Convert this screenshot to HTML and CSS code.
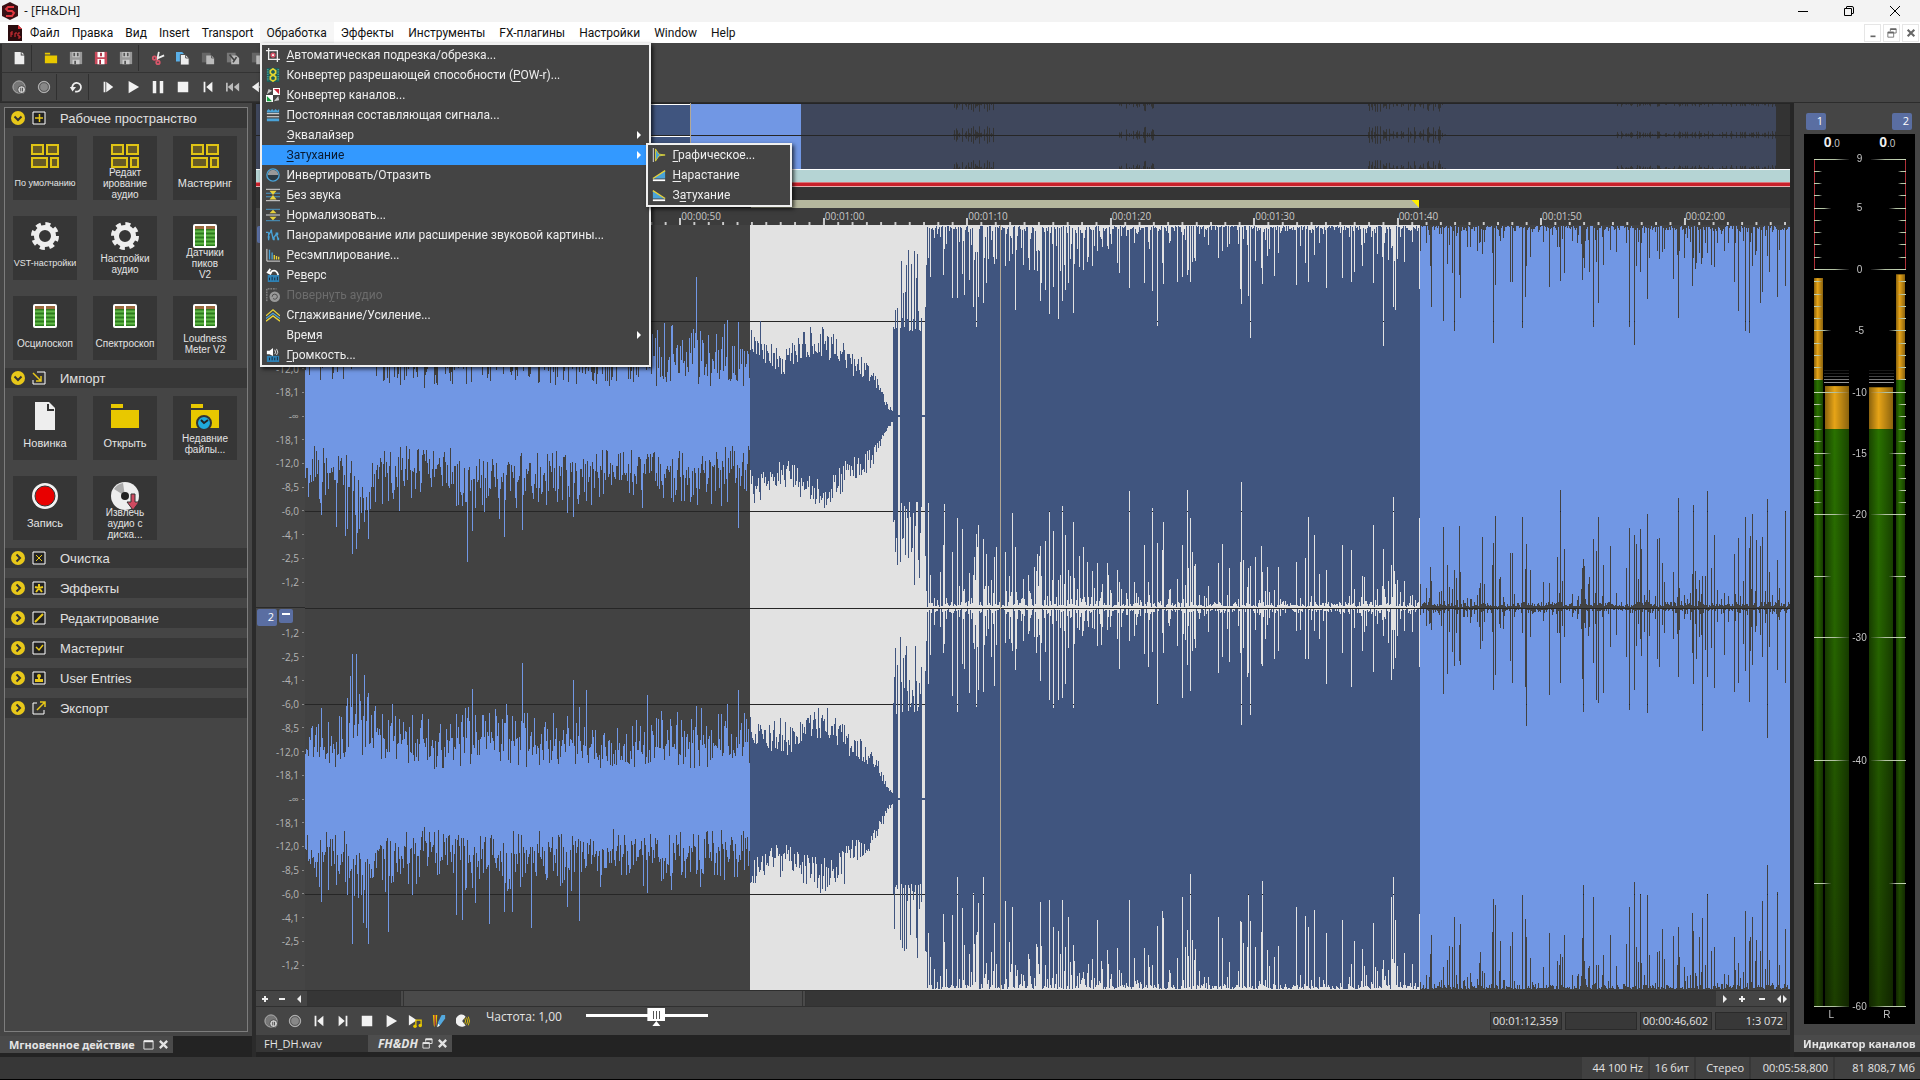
FILE: index.html
```html
<!DOCTYPE html>
<html lang="ru">
<head>
    <meta charset="UTF-8" />
    <title>FH&amp;DH</title>
    <link rel="stylesheet" href="styles.css">
</head>
<body>
    <!-- Icon symbols -->
    <svg class="symbols" aria-hidden="true">
        <symbol id="i-doc" viewBox="0 0 16 16"><path d="M3 1h7v4h4v10H3z" fill="#eee"/><path d="M11 1l3 3h-3z" fill="#eee"/></symbol>
        <symbol id="i-folder" viewBox="0 0 16 16"><path d="M1 2h6v2H1zM1 5h14v9H1z" fill="#e8c800"/></symbol>
        <symbol id="i-save" viewBox="0 0 16 16"><path d="M1 1h14v14H1z" fill="#999"/><path d="M4 1h8v6H4zM4 10h8v5H4z" fill="#ccc"/><path d="M5 2h2v4H5zM9 2h2v4H9zM6 11h2v4H6z" fill="#555"/></symbol>
        <symbol id="i-saveas" viewBox="0 0 16 16"><path d="M1 1h14v14H1z" fill="#c94a5c"/><path d="M4 1h8v6H4zM4 9h8v6H4z" fill="#fff"/><path d="M7 2h2v4H7zM6 10h2v5H6z" fill="#a3243a"/></symbol>
        <symbol id="i-cut" viewBox="0 0 16 16"><path d="M9 1L7 10M15 5L6 9" stroke="#eee" stroke-width="2"/><circle cx="4" cy="8" r="2" fill="none" stroke="#d8566a" stroke-width="2"/><circle cx="8" cy="13" r="2" fill="none" stroke="#d8566a" stroke-width="2"/></symbol>
        <symbol id="i-copy" viewBox="0 0 16 16"><path d="M0 1h7l2 2v9H0z" fill="#5ab0e8"/><path d="M5 4h6l4 4v8H5z" fill="#eee" stroke="#444"/><path d="M11 4v4h4" fill="none" stroke="#444"/></symbol>
        <symbol id="i-paste" viewBox="0 0 16 16"><path d="M1 2h10v11H1z" fill="#666"/><path d="M6 5h6l3 3v7H6z" fill="#bbb"/><path d="M12 5v3h3" stroke="#555" fill="none"/></symbol>
        <symbol id="i-paste2" viewBox="0 0 16 16"><path d="M1 2h10v11H1z" fill="#777"/><path d="M6 5h6l3 3v7H6z" fill="#bbb"/><path d="M4 4l5 6M12 7l-4 6" stroke="#444" stroke-width="2"/></symbol>
        <symbol id="i-recpause" viewBox="0 0 16 16"><circle cx="8" cy="8" r="7" fill="#777" stroke="#bbb"/><circle cx="11" cy="11" r="4.5" fill="#ccc" stroke="#444"/><path d="M10 9v4M12 9v4" stroke="#444"/></symbol>
        <symbol id="i-rec" viewBox="0 0 16 16"><circle cx="8" cy="8" r="6.5" fill="#888" stroke="#bbb"/><circle cx="8" cy="8" r="5" fill="none" stroke="#555"/></symbol>
        <symbol id="i-loop" viewBox="0 0 16 16"><path d="M4 10a5 5 0 1 1 3 3" fill="none" stroke="#eee" stroke-width="2"/><path d="M1 8h7l-4 5z" fill="#eee"/></symbol>
        <symbol id="i-playall" viewBox="0 0 16 16"><path d="M3 2h2v12H3zM6 2l8 6-8 6z" fill="#f2f2f2"/></symbol>
        <symbol id="i-play" viewBox="0 0 16 16"><path d="M3 1l12 7-12 7z" fill="#f2f2f2"/></symbol>
        <symbol id="i-pause" viewBox="0 0 16 16"><path d="M2 1h4v14H2zM10 1h4v14h-4z" fill="#f2f2f2"/></symbol>
        <symbol id="i-stop" viewBox="0 0 16 16"><path d="M2 2h12v12H2z" fill="#f2f2f2"/></symbol>
        <symbol id="i-start" viewBox="0 0 16 16"><path d="M3 2h2v12H3zM13 2v12L6 8z" fill="#f2f2f2"/></symbol>
        <symbol id="i-end" viewBox="0 0 16 16"><path d="M11 2h2v12h-2zM3 2v12l7-6z" fill="#f2f2f2"/></symbol>
        <symbol id="i-rew" viewBox="0 0 16 16"><path d="M0 3h2v10H0zM8 3v10L2 8zM15 3v10L9 8z" fill="#bbb"/></symbol>
        <symbol id="i-back" viewBox="0 0 16 16"><path d="M9 2v12L1 8zM16 2v12L9 8z" fill="#eee"/></symbol>
        <symbol id="i-playnote" viewBox="0 0 16 16"><path d="M1 1l9 6-9 6z" fill="#f2f2f2"/><path d="M9 13V7h6v6" stroke="#e8c800" stroke-width="1.5" fill="none"/><circle cx="8" cy="14" r="2" fill="#e8c800"/><circle cx="14" cy="13" r="2" fill="#e8c800"/></symbol>
        <symbol id="i-pencils" viewBox="0 0 16 16"><path d="M1 1h2v14l-1-2zM4 1h2l-1 14z" fill="#e8c800"/><path d="M3 1h1v12H3z" fill="#e33"/><path d="M11 1h4v4l-5 7-4 3 1-6z" fill="#54a9de"/><path d="M6 15l1-4 2 2z" fill="#fff"/></symbol>
        <symbol id="i-scrub" viewBox="0 0 16 16"><path d="M9 1a7 7 0 1 0 2 12L7 8l4-5z" fill="#f2f2f2"/><path d="M10 5q2 3 0 6M12 4q3 4 0 8M14 3q3 5 0 10" stroke="#e8c800" fill="none"/></symbol>

        <symbol id="i-crop" viewBox="0 0 16 16"><path d="M0 3h13v13M3 0v13h13" fill="none" stroke="#eee" stroke-width="1.500"/><circle cx="8" cy="8" r="3" fill="#d8566a"/><path d="M7 7h2v2H7z" fill="#fff"/></symbol>
        <symbol id="i-bits" viewBox="0 0 16 16"><path d="M1 0h14v16H1z" fill="#1c5a58"/><path d="M2 1v14M14 1v14" stroke="#4bb2a8" stroke-dasharray="1 1" stroke-width="2"/><path d="M8 1l3 2v3L8 8 5 6V3zM8 8l3 2v3l-3 2-3-2v-3z" fill="none" stroke="#e2d531" stroke-width="2"/></symbol>
        <symbol id="i-chan" viewBox="0 0 16 16"><path d="M8 0h8v8H8zM0 8h8v8H0z" fill="#fff"/><path d="M1 7l2-6 4 2zM9 15l5-6 1 5z" fill="#ccc"/><path d="M9 1h6v6z" fill="#c8283c"/><path d="M1 9l6 6H1z" fill="#18a040"/></symbol>
        <symbol id="i-dc" viewBox="0 0 16 16"><path d="M1 3l2-2 2 2 2-2 2 2 2-2 2 2 2-2v4H1zM1 12h14v3H1z" fill="#4aa3d8"/><path d="M1 6.500h14M1 10h14" stroke="#fff"/></symbol>
        <symbol id="i-invert" viewBox="0 0 16 16"><circle cx="8" cy="8" r="7" fill="#2c3b44" stroke="#4aa3d8" stroke-width="1.500"/><path d="M2 8a6 6 0 0 1 12 0z" fill="#999"/></symbol>
        <symbol id="i-mute" viewBox="0 0 16 16"><path d="M0 1.500h16M0 14.500h16" stroke="#eee"/><path d="M0 6h16M0 10h16" stroke="#4aa3d8"/><path d="M4 3h8L8 8zM4 13h8L8 8z" fill="#e8d23a"/></symbol>
        <symbol id="i-norm" viewBox="0 0 16 16"><path d="M0 1.500h16M0 14.500h16" stroke="#4aa3d8"/><path d="M0 8h16" stroke="#eee"/><path d="M4 6h8L8 2zM4 10h8l-4 4z" fill="#e8d23a"/></symbol>
        <symbol id="i-pan" viewBox="0 0 16 16"><path d="M0 5h3M3 5v9M3 8l3-5 2 9 4-5 2 6" fill="none" stroke="#4aa3d8" stroke-width="1.500"/><path d="M2 9h2v3H2zM5 2h2v3H5zM11 5h3v3h-3zM8 11h2v3H8zM13 11h2v3h-2z" fill="#4aa3d8"/></symbol>
        <symbol id="i-resample" viewBox="0 0 16 16"><path d="M1 1v14h15" stroke="#eee" fill="none"/><path d="M4 2v11M7 5v8" stroke="#4aa3d8" stroke-width="1.500"/><path d="M9.500 8v5M12 9v4M14.500 10v3" stroke="#e8d23a" stroke-width="1.500"/></symbol>
        <symbol id="i-reverse" viewBox="0 0 16 16"><path d="M2 8h13v8H2z" fill="#2f82b5"/><path d="M4 14v-3M7 14v-4M10 14v-3M13 14v-4" stroke="#123"/><path d="M2 5h5M5 1L2 5l4 2M6 4q6-3 8 4" fill="none" stroke="#fff" stroke-width="2"/></symbol>
        <symbol id="i-rotate" viewBox="0 0 16 16"><path d="M1 15V1h11" fill="none" stroke="#aaa" stroke-dasharray="2 1"/><circle cx="10" cy="10" r="6" fill="#999"/><path d="M7 10a3 3 0 0 1 6 0M13 10a3 3 0 0 1-5 2" stroke="#444" fill="none"/></symbol>
        <symbol id="i-smooth" viewBox="0 0 16 16"><path d="M0 9l8-7 8 7M0 15l8-6 8 6" fill="none" stroke="#e8d23a" stroke-width="1.500"/><path d="M0 12l8-6 8 6" fill="none" stroke="#4aa3d8" stroke-width="1.500"/></symbol>
        <symbol id="i-volume" viewBox="0 0 16 16"><path d="M1 9h14v7H1z" fill="#2f82b5"/><path d="M4 14v-3M7 14v-4M10 14v-3M13 14v-4" stroke="#123"/><path d="M1 3h3l4-3v9L4 7H1z" fill="#fff"/><path d="M10 2q2 3 0 5M12 1q3 4 0 7" stroke="#eee" fill="none"/></symbol>
        <symbol id="i-graph" viewBox="0 0 16 16"><path d="M1.500 0v16" stroke="#eee"/><path d="M4 1l4 6 7 1-7 1-4 6z" fill="#4aa3d8" stroke="#e2d531"/></symbol>
        <symbol id="i-fadein" viewBox="0 0 16 16"><path d="M1 12L15 3v9z" fill="#4aa3d8"/><path d="M1 12L15 3" stroke="#e8d23a" stroke-width="1.500"/><path d="M1 14h14" stroke="#fff" stroke-width="2"/></symbol>
        <symbol id="i-fadeout" viewBox="0 0 16 16"><path d="M1 3v9h14z" fill="#4aa3d8"/><path d="M1 3l14 9" stroke="#e8d23a" stroke-width="1.500"/><path d="M1 14h14" stroke="#fff" stroke-width="2"/></symbol>

        <symbol id="i-layout" viewBox="0 0 28 28"><path d="M1 3h11v9H1zM16 3h11v9H16zM1 16h15v9H1zM20 16h7v9h-7z" fill="#665a26" stroke="#e0c414" stroke-width="2"/></symbol>
        <symbol id="i-gear" viewBox="0 0 28 28"><circle cx="14" cy="14" r="8.500" fill="none" stroke="#eee" stroke-width="5"/><circle cx="14" cy="14" r="12" fill="none" stroke="#eee" stroke-width="4" stroke-dasharray="5 4.424"/></symbol>
        <symbol id="i-peaks" viewBox="0 0 28 28"><rect x="2" y="2" width="24" height="24" rx="2" fill="#fff"/><path d="M4 4h9v20H4zM15 4h9v20h-9z" fill="#2c7d1e"/><path d="M4 4h9v3H4zM15 4h9v3h-9z" fill="#9b6a40"/><path d="M4 9.500h9M4 13.500h9M4 17.500h9M4 21.500h9M15 9.500h9M15 13.500h9M15 17.500h9M15 21.500h9" stroke="#62b848" stroke-width="2"/></symbol>
        <symbol id="i-bigdoc" viewBox="0 0 28 28"><path d="M4 0h14l6 6v22H4z" fill="#eee"/><path d="M17 2v6h6" fill="none" stroke="#333" stroke-width="2"/></symbol>
        <symbol id="i-bigfolder" viewBox="0 0 28 28"><path d="M0 2h12v4H0zM0 8h28v18H0z" fill="#e8c800"/></symbol>
        <symbol id="i-recent" viewBox="0 0 28 28"><path d="M0 2h12v4H0zM0 8h28v18H0z" fill="#e8c800"/><circle cx="13" cy="21" r="7" fill="#20aadb" stroke="#333" stroke-width="2"/><path d="M10 18l3 3 4-3" fill="none" stroke="#222" stroke-width="2"/></symbol>
        <symbol id="i-record" viewBox="0 0 28 28"><circle cx="14" cy="14" r="13" fill="#f2f2f2"/><circle cx="14" cy="14" r="10" fill="#e80000" stroke="#333"/></symbol>
        <symbol id="i-disc" viewBox="0 0 28 28"><circle cx="14" cy="14" r="14" fill="#eee"/><path d="M14 14L3 7a14 14 0 0 1 9-6z" fill="#aaa"/><circle cx="14" cy="14" r="4" fill="#222"/><path d="M20 12h4v8h4l-6 8-6-8h4z" fill="#d04a60" stroke="#333"/></symbol>
        <symbol id="i-open" viewBox="0 0 14 14"><circle cx="7" cy="7" r="7" fill="#e8c81a"/><path d="M3.500 5.500L7 9l3.500-3.500" fill="none" stroke="#333" stroke-width="2"/></symbol>
        <symbol id="i-closed" viewBox="0 0 14 14"><circle cx="7" cy="7" r="7" fill="#e8c81a"/><path d="M5.500 3.500L9 7l-3.500 3.500" fill="none" stroke="#333" stroke-width="2"/></symbol>
        <symbol id="i-float" viewBox="0 0 12 12"><path d="M1 2h10v9H1z" fill="none" stroke="#eee"/><path d="M1 2.500h10" stroke="#eee" stroke-width="2"/></symbol>
        <symbol id="i-restore" viewBox="0 0 12 12"><path d="M4 4V1h7v5H8M1 5h7v6H1z" fill="none" stroke="currentColor"/><path d="M1 5.500h7M4 1.500h7" stroke="currentColor" stroke-width="2"/></symbol>
        <symbol id="i-x" viewBox="0 0 12 12"><path d="M2 2l8 8M10 2l-8 8" stroke="currentColor" stroke-width="2.500"/></symbol>
    </svg>

    <header class="titlebar">
        <svg class="app-logo" viewBox="0 0 18 18"><path d="M9 0l8 4v10l-8 4-8-4V4z" fill="#3a1014"/><path d="M13 5H7L5 7l2 2h4l2 2-2 3H5" fill="none" stroke="#e0353d" stroke-width="2"/></svg>
        <h1>- [FH&amp;DH]</h1>
        <div class="window-buttons">
            <button aria-label="Свернуть"><svg viewBox="0 0 12 12"><path d="M1 6.500h10" stroke="#000"/></svg></button>
            <button aria-label="Восстановить"><svg viewBox="0 0 12 12"><path d="M3.500 3V2q0-.5.500-.5h5q1.500 0 1.500 1.500v5q0 .5-.5.500H9M1.500 3.500h7v7h-7z" fill="none" stroke="#000"/></svg></button>
            <button aria-label="Закрыть"><svg viewBox="0 0 12 12"><path d="M1 1l10 10M11 1L1 11" stroke="#000"/></svg></button>
        </div>
    </header>

    <nav class="menubar">
        <svg class="doc-logo" viewBox="0 0 14 16"><path d="M0 0h10l4 4v12H0z" fill="#2a0c0e"/><path d="M10 0l4 4h-4z" fill="#e03038"/><path d="M3 12V7h2M3 9h2M7 12V8h2M12 8h-2v3h2v2h-2" stroke="#e03038" fill="none"/></svg>
        <button>Файл</button>
        <button>Правка</button>
        <button>Вид</button>
        <button>Insert</button>
        <button>Transport</button>
        <div class="menu-holder">
            <button>Обработка</button>
            <ul class="menu">
                <li><button><svg><use href="#i-crop"/></svg><span><u>А</u>втоматическая подрезка/обрезка...</span></button></li>
                <li><button><svg><use href="#i-bits"/></svg><span>Конвертер разрешающей способности (<u>P</u>OW-r)...</span></button></li>
                <li><button><svg><use href="#i-chan"/></svg><span><u>К</u>онвертер каналов...</span></button></li>
                <li><button><svg><use href="#i-dc"/></svg><span><u>П</u>остоянная составляющая сигнала...</span></button></li>
                <li><button class="has-sub"><svg></svg><span><u>Э</u>квалайзер</span></button></li>
                <li class="open">
                    <button class="has-sub"><svg></svg><span><u>З</u>атухание</span></button>
                    <ul class="menu submenu">
                        <li><button><svg><use href="#i-graph"/></svg><span><u>Г</u>рафическое...</span></button></li>
                        <li><button><svg><use href="#i-fadein"/></svg><span><u>Н</u>арастание</span></button></li>
                        <li><button><svg><use href="#i-fadeout"/></svg><span>З<u>а</u>тухание</span></button></li>
                    </ul>
                </li>
                <li><button><svg><use href="#i-invert"/></svg><span><u>И</u>нвертировать/Отразить</span></button></li>
                <li><button><svg><use href="#i-mute"/></svg><span><u>Б</u>ез звука</span></button></li>
                <li><button><svg><use href="#i-norm"/></svg><span><u>Н</u>ормализовать...</span></button></li>
                <li><button><svg><use href="#i-pan"/></svg><span>Пан<u>о</u>рамирование или расширение звуковой картины...</span></button></li>
                <li><button><svg><use href="#i-resample"/></svg><span><u>Р</u>есэмплирование...</span></button></li>
                <li><button><svg><use href="#i-reverse"/></svg><span>Ре<u>в</u>ерс</span></button></li>
                <li><button disabled><svg><use href="#i-rotate"/></svg><span>Поверн<u>у</u>ть аудио</span></button></li>
                <li><button><svg><use href="#i-smooth"/></svg><span>Сг<u>л</u>аживание/Усиление...</span></button></li>
                <li><button class="has-sub"><svg></svg><span>Вре<u>м</u>я</span></button></li>
                <li><button><svg><use href="#i-volume"/></svg><span><u>Г</u>ромкость...</span></button></li>
            </ul>
        </div>
        <button>Эффекты</button>
        <button>Инструменты</button>
        <button>FX-плагины</button>
        <button>Настройки</button>
        <button>Window</button>
        <button>Help</button>
        <div class="mdi-buttons">
            <button aria-label="Свернуть окно"><svg viewBox="0 0 12 12"><path d="M3 10h6" stroke="#666" stroke-width="2"/></svg></button>
            <button aria-label="Восстановить окно"><svg><use href="#i-restore"/></svg></button>
            <button aria-label="Закрыть окно"><svg><use href="#i-x"/></svg></button>
        </div>
    </nav>

    <div class="toolbars">
        <div class="toolbar">
            <button aria-label="Новый"><svg><use href="#i-doc"/></svg></button>
            <i class="sep"></i>
            <button aria-label="Открыть файл"><svg><use href="#i-folder"/></svg></button>
            <button aria-label="Сохранить"><svg><use href="#i-save"/></svg></button>
            <button aria-label="Сохранить как"><svg><use href="#i-saveas"/></svg></button>
            <button aria-label="Сохранить все"><svg><use href="#i-save"/></svg></button>
            <i class="sep"></i>
            <button aria-label="Вырезать"><svg><use href="#i-cut"/></svg></button>
            <button aria-label="Копировать"><svg><use href="#i-copy"/></svg></button>
            <button aria-label="Вставить"><svg><use href="#i-paste"/></svg></button>
            <button aria-label="Смешать"><svg><use href="#i-paste2"/></svg></button>
            <button aria-label="Вставить в новый"><svg><use href="#i-paste"/></svg></button>
        </div>
        <div class="toolbar">
            <button aria-label="Запись с паузой"><svg><use href="#i-recpause"/></svg></button>
            <button aria-label="Запись"><svg><use href="#i-rec"/></svg></button>
            <i class="sep"></i>
            <button aria-label="Цикл"><svg><use href="#i-loop"/></svg></button>
            <i class="sep"></i>
            <button aria-label="Воспроизвести всё"><svg><use href="#i-playall"/></svg></button>
            <button aria-label="Воспроизвести"><svg><use href="#i-play"/></svg></button>
            <button aria-label="Пауза"><svg><use href="#i-pause"/></svg></button>
            <button aria-label="Стоп"><svg><use href="#i-stop"/></svg></button>
            <button aria-label="В начало"><svg><use href="#i-start"/></svg></button>
            <button aria-label="Перемотка"><svg><use href="#i-rew"/></svg></button>
            <button aria-label="Назад"><svg><use href="#i-back"/></svg></button>
        </div>
    </div>

    <main>
        <aside class="actions">
            <div class="actions-panel">
                <h2><svg><use href="#i-open"/></svg><svg viewBox="0 0 14 14"><path d="M1 1h12v12H1z" fill="#222" stroke="#fff"/><path d="M3 7h8M7.500 3v8" stroke="#e8c81a" stroke-width="1.500"/></svg>Рабочее пространство</h2>
                <div class="tiles">
                    <button class="tight"><svg><use href="#i-layout"/></svg><span>По умолчанию</span></button>
                    <button class="medium"><svg><use href="#i-layout"/></svg><span>Редакт<br>ирование<br>аудио</span></button>
                    <button><svg><use href="#i-layout"/></svg><span>Мастеринг</span></button>
                    <button class="tight"><svg><use href="#i-gear"/></svg><span>VST-настройки</span></button>
                    <button class="medium"><svg><use href="#i-gear"/></svg><span>Настройки<br>аудио</span></button>
                    <button class="medium"><svg><use href="#i-peaks"/></svg><span>Датчики<br>пиков<br>V2</span></button>
                    <button class="medium"><svg><use href="#i-peaks"/></svg><span>Осцилоскоп</span></button>
                    <button class="medium"><svg><use href="#i-peaks"/></svg><span>Спектроскоп</span></button>
                    <button class="medium"><svg><use href="#i-peaks"/></svg><span>Loudness<br>Meter V2</span></button>
                </div>
                <h2><svg><use href="#i-open"/></svg><svg viewBox="0 0 14 14"><path d="M5 1h8v12H1V9" fill="none" stroke="#fff"/><path d="M1 2l8 8M9 5v5H4" fill="none" stroke="#e8c81a" stroke-width="1.500"/></svg>Импорт</h2>
                <div class="tiles">
                    <button><svg><use href="#i-bigdoc"/></svg><span>Новинка</span></button>
                    <button><svg><use href="#i-bigfolder"/></svg><span>Открыть</span></button>
                    <button class="medium"><svg><use href="#i-recent"/></svg><span>Недавние<br>файлы...</span></button>
                    <button><svg><use href="#i-record"/></svg><span>Запись</span></button>
                    <button class="medium"><svg><use href="#i-disc"/></svg><span>Извлечь<br>аудио с<br>диска...</span></button>
                </div>
                <h2 class="closed"><svg><use href="#i-closed"/></svg><svg viewBox="0 0 14 14"><path d="M1 1h12v12H1z" fill="#222" stroke="#fff"/><path d="M4 4l6 6M10 4l-6 6" stroke="#e8c81a"/></svg>Очистка</h2>
                <h2 class="closed"><svg><use href="#i-closed"/></svg><svg viewBox="0 0 14 14"><path d="M1 1h12v12H1z" fill="#222" stroke="#fff"/><path d="M7 3v4l3 4M7 7l-3 4M3 6l4 1 4-1" fill="none" stroke="#e8c81a" stroke-width="2"/></svg>Эффекты</h2>
                <h2 class="closed"><svg><use href="#i-closed"/></svg><svg viewBox="0 0 14 14"><path d="M1 1h12v12H1z" fill="#222" stroke="#fff"/><path d="M5 9l6-6M3 11l2-2" stroke="#e8c81a" stroke-width="2"/></svg>Редактирование</h2>
                <h2 class="closed"><svg><use href="#i-closed"/></svg><svg viewBox="0 0 14 14"><path d="M1 1h12v12H1z" fill="#222" stroke="#fff"/><path d="M4 6l3 3 4-5" fill="none" stroke="#e8c81a" stroke-width="1.500"/></svg>Мастеринг</h2>
                <h2 class="closed"><svg><use href="#i-closed"/></svg><svg viewBox="0 0 14 14"><path d="M1 1h12v12H1z" fill="#222" stroke="#fff"/><path d="M3 11V8h3V4h2v4h3v3z" fill="#e8c81a"/><circle cx="7" cy="5" r="2" fill="#e8c81a"/></svg>User Entries</h2>
                <h2 class="closed"><svg><use href="#i-closed"/></svg><svg viewBox="0 0 14 14"><path d="M5 2H1v11h11V9" fill="none" stroke="#fff"/><path d="M5 9l8-8M8 1h5v5" fill="none" stroke="#e8c81a" stroke-width="1.500"/></svg>Экспорт</h2>
            </div>
            <div class="dock-tab">
                <span>Мгновенное действие</span>
                <button aria-label="Открепить"><svg><use href="#i-float"/></svg></button>
                <button aria-label="Закрыть панель"><svg><use href="#i-x"/></svg></button>
            </div>
        </aside>

        <section class="editor">
            <canvas class="overview" id="overview"></canvas>
            <div class="position-bar"></div>
            <div class="marker-bar"><i class="selection-span"></i></div>
            <div class="ruler">
                <div class="ruler-cells">
                    <span>00:00:20</span><span>00:00:30</span><span>00:00:40</span><span>00:00:50</span><span>00:01:00</span><span>00:01:10</span><span>00:01:20</span><span>00:01:30</span><span>00:01:40</span><span>00:01:50</span><span>00:02:00</span>
                </div>
            </div>
            <div class="wave-area">
                <div class="db-scale">
                    <div class="lane">
                        <b class="badge">1</b><button class="badge fold" aria-label="Свернуть канал 1"></button>
                        <ol><li>-1,2</li><li>-2,5</li><li>-4,1</li><li>-6,0</li><li>-8,5</li><li>-12,0</li><li>-18,1</li><li>-∞</li><li>-18,1</li><li>-12,0</li><li>-8,5</li><li>-6,0</li><li>-4,1</li><li>-2,5</li><li>-1,2</li></ol>
                    </div>
                    <div class="lane">
                        <b class="badge">2</b><button class="badge fold" aria-label="Свернуть канал 2"></button>
                        <ol><li>-1,2</li><li>-2,5</li><li>-4,1</li><li>-6,0</li><li>-8,5</li><li>-12,0</li><li>-18,1</li><li>-∞</li><li>-18,1</li><li>-12,0</li><li>-8,5</li><li>-6,0</li><li>-4,1</li><li>-2,5</li><li>-1,2</li></ol>
                    </div>
                </div>
                <div class="wave-box"><canvas id="wave"></canvas></div>
            </div>
            <div class="scroll-row">
                <button aria-label="Увеличить"><svg viewBox="0 0 8 8"><path d="M4 1v6M1 4h6" stroke="#eee" stroke-width="2"/></svg></button>
                <button aria-label="Уменьшить"><svg viewBox="0 0 8 8"><path d="M1 4h6" stroke="#eee" stroke-width="2"/></svg></button>
                <button aria-label="Влево"><svg viewBox="0 0 8 8"><path d="M6 0v8L2 4z" fill="#eee"/></svg></button>
                <div class="scroll-track"><div class="scroll-thumb"></div></div>
                <button aria-label="Вправо"><svg viewBox="0 0 8 8"><path d="M2 0v8l4-4z" fill="#eee"/></svg></button>
                <button aria-label="Увеличить время"><svg viewBox="0 0 8 8"><path d="M4 1v6M1 4h6" stroke="#eee" stroke-width="2"/></svg></button>
                <button class="wide" aria-label="Уменьшить время"><svg viewBox="0 0 8 8"><path d="M1 4h6" stroke="#eee" stroke-width="2"/></svg></button>
                <button aria-label="Вся ширина"><svg class="both" viewBox="0 0 10 8"><path d="M4 0v8L0 4zM6 0v8l4-4z" fill="#eee"/></svg></button>
            </div>
            <div class="transport">
                <button aria-label="Запись с паузой"><svg><use href="#i-recpause"/></svg></button>
                <button aria-label="Запись"><svg><use href="#i-rec"/></svg></button>
                <button aria-label="В начало"><svg><use href="#i-start"/></svg></button>
                <button aria-label="В конец"><svg><use href="#i-end"/></svg></button>
                <button aria-label="Стоп"><svg><use href="#i-stop"/></svg></button>
                <button aria-label="Воспроизвести"><svg><use href="#i-play"/></svg></button>
                <button aria-label="Воспроизвести с эффектами"><svg><use href="#i-playnote"/></svg></button>
                <button aria-label="Инструменты правки"><svg><use href="#i-pencils"/></svg></button>
                <button aria-label="Прослушивание"><svg><use href="#i-scrub"/></svg></button>
                <label for="rate">Частота: 1,00</label>
                <input type="range" id="rate" min="0" max="100" value="59" />
                <div class="readouts">
                    <output>00:01:12,359</output><output></output><output>00:00:46,602</output><output>1:3 072</output>
                </div>
            </div>
            <div class="file-tabs">
                <button>FH_DH.wav</button>
                <button class="active"><span>FH&amp;DH</span><svg><use href="#i-restore"/></svg><svg><use href="#i-x"/></svg></button>
            </div>
        </section>

        <aside class="meters">
            <div class="meter-badges"><b class="badge">1</b><b class="badge">2</b></div>
            <div class="meter">
                <div class="peaks"><span><b>0</b>.0</span><span><b>0</b>.0</span></div>
                <div class="meter-scale">
                    <canvas id="meter"></canvas>
                    <ol id="meterLabels"></ol>
                </div>
                <div class="channels"><span>L</span><span>R</span></div>
            </div>
            <div class="dock-tab">Индикатор каналов</div>
        </aside>
    </main>

    <footer class="statusbar">
        <span class="hz">44 100 Hz</span><span class="bits">16 бит</span><span class="mode">Стерео</span><span class="len">00:05:58,800</span><span class="free">81 808,7 Мб</span>
    </footer>

    <script src="script.js"></script>
</body>
</html>
```
FILE: styles.css
```css
* {
    box-sizing: border-box;
}

body {
    margin: 0;
    height: 100vh;
    display: flex;
    flex-direction: column;
    overflow: hidden;
    background-color: #232323;
    color: #e4e4e4;
    font-family: "Open Sans", "Noto Sans", sans-serif;
    font-size: 12px;
    line-height: 16px;
}

button {
    font: inherit;
    color: inherit;
    background: none;
    border: none;
    padding: 0;
    margin: 0;
}

ul,
ol {
    list-style: none;
    margin: 0;
    padding: 0;
}

svg {
    display: block;
    flex: none;
}

.symbols {
    display: none;
}

/* Title bar */
.titlebar {
    flex: none;
    height: 22px;
    display: flex;
    align-items: center;
    padding-left: 1px;
    background-color: #f3f3f3;
    color: #111;
}

.app-logo {
    width: 18px;
    height: 18px;
}

.titlebar h1 {
    margin: 0 0 0 5px;
    font-size: 12px;
    font-weight: normal;
}

.window-buttons {
    margin-left: auto;
    display: flex;
    padding-right: 2px;
}

.window-buttons button {
    width: 46px;
    height: 22px;
    display: grid;
    place-items: center;
}

.window-buttons svg {
    width: 12px;
    height: 12px;
}

/* Menu bar */
.menubar {
    flex: none;
    height: 21px;
    display: flex;
    align-items: center;
    background-color: #fff;
    color: #111;
    font-family: Roboto, "Open Sans", sans-serif;
    position: relative;
    z-index: 2;
}

.menubar > button {
    padding: 0 6px;
    height: 21px;
}

.menu-holder > button,
.menu-holder ~ button {
    padding: 0 7px;
    height: 21px;
}

.doc-logo {
    width: 14px;
    height: 16px;
    margin: 0 2px 0 8px;
}

.menu-holder {
    position: relative;
}

.menu-holder > button {
    background-color: #f6f6f6;
}

.mdi-buttons {
    margin-left: auto;
    display: flex;
    gap: 2px;
    padding-right: 1px;
    color: #666;
}

.mdi-buttons button {
    width: 17px;
    height: 18px;
    border: 1px solid #e6e6e6;
    display: grid;
    place-items: center;
}

.mdi-buttons svg {
    width: 10px;
    height: 10px;
}

.menu {
    position: absolute;
    top: 21px;
    left: 0;
    width: 391px;
    border: 2px solid #f0f0f0;
    background-color: #444;
    color: #eee;
    box-shadow: 2px 2px 4px rgba(0, 0, 0, 0.7);
    z-index: 3;
}

.menu li {
    position: relative;
}

.menu button {
    width: 100%;
    height: 20px;
    display: flex;
    align-items: center;
    gap: 7px;
    padding: 0 4px;
    text-align: left;
    white-space: nowrap;
}

.menu svg {
    width: 14px;
    height: 14px;
}

.menu u {
    text-underline-offset: 2px;
}

.menu .has-sub::after {
    content: "";
    margin-left: auto;
    border: 4px solid transparent;
    border-left-color: #fff;
    border-right-width: 0;
    margin-right: 4px;
}

.menu .open > button {
    background-color: #3399ff;
    color: #0a1a30;
}

.menu button:disabled {
    color: #6c6c6c;
}

.menu .submenu {
    top: -2px;
    left: 384px;
    width: 146px;
}

/* Toolbars */
.toolbars {
    flex: none;
    background-color: #454545;
    padding-top: 1px;
    border-bottom: 1px solid #2c2c2c;
}

.toolbar {
    height: 29px;
    display: flex;
    align-items: center;
    padding-left: 4px;
    border-left: 2px solid #2e2e2e;
    border-bottom: 1px solid #333;
    width: 650px;
}

.toolbar button {
    width: 25px;
    height: 28px;
    display: grid;
    place-items: center;
}

.toolbar svg,
.transport svg {
    width: 14px;
    height: 16px;
}

.sep {
    width: 7px;
    height: 26px;
    border-left: 1px solid #303030;
}

/* Main area */
main {
    flex: 1;
    min-height: 0;
    display: flex;
}

.actions {
    width: 256px;
    flex: none;
    display: flex;
    flex-direction: column;
    border-right: 4px solid #2b2b2b;
}

.actions-panel {
    flex: 1;
    min-height: 0;
    background-color: #454545;
    border: 1px solid #7d7d7d;
    outline: 4px solid #454545;
    margin: 4px;
}

.actions h2 {
    margin: 0;
    height: 20px;
    display: flex;
    align-items: center;
    gap: 7px;
    padding-left: 6px;
    background-color: #373737;
    font: 13px "Liberation Sans", Arial, sans-serif;
    color: #e0e0e0;
}

.actions h2 svg {
    width: 14px;
    height: 14px;
}

.actions h2 svg + svg {
    margin-right: 7px;
}

.actions h2.closed {
    margin-bottom: 10px;
}

.tiles {
    display: grid;
    grid-template-columns: repeat(3, 64px);
    gap: 16px;
    padding: 8px;
}

.tiles button {
    height: 64px;
    background-color: #363636;
    display: flex;
    flex-direction: column;
    align-items: center;
    padding: 6px 0 3px;
    font: 11px/11px "Liberation Sans", Arial, sans-serif;
    white-space: nowrap;
}

.tiles .medium {
    font-size: 10px;
}

.tiles .tight {
    font-size: 9px;
}

.tiles svg {
    width: 28px;
    height: 28px;
}

.tiles span {
    flex: 1;
    min-height: 0;
    display: flex;
    align-items: center;
}

.dock-tab {
    flex: none;
    height: 17px;
    margin-bottom: 4px;
    display: flex;
    align-items: center;
    gap: 4px;
    align-self: flex-start;
    padding: 0 4px 0 9px;
    background-color: #4a4a4a;
    font: bold 11px "Noto Sans", sans-serif;
    white-space: nowrap;
}

.dock-tab span {
    padding-right: 4px;
}

.dock-tab svg,
.file-tabs svg {
    width: 11px;
    height: 11px;
}

/* Editor */
.editor {
    flex: 1;
    min-width: 0;
    display: flex;
    flex-direction: column;
    background-color: #454545;
    border-right: 4px solid #262626;
}

.overview {
    display: block;
    width: 100%;
    height: 66px;
    flex: none;
}

.position-bar {
    height: 18px;
    flex: none;
    background: linear-gradient(#fff 1px, #b5d4d4 1px, #b5d4d4 13px, #f0c8c8 13px, #c8202a 14px, #c8202a 17px, #e8b0b0 17px);
}

.marker-bar {
    height: 21px;
    flex: none;
    background-color: #353535;
    display: flex;
    align-items: flex-end;
    padding-left: 49px;
}

.selection-span {
    margin-left: 30%;
    width: 45%;
    height: 8px;
    background: linear-gradient(225deg, #ffee00 5px, #b5b79d 5px);
}

.ruler {
    height: 17px;
    flex: none;
    margin-left: 49px;
    overflow: hidden;
    background-color: #3c3c3c;
}

.ruler-cells {
    display: flex;
    margin: 0 -37px 0 -56px;
}

.ruler-cells span {
    flex: 1;
    height: 17px;
    padding-left: 2px;
    font-size: 10px;
    color: #c8c8c8;
    background-image: linear-gradient(to right, #ccc 2px, transparent 2px), linear-gradient(to right, #ccc 2px, transparent 2px);
    background-size: 100% 7px, 10% 3px;
    background-repeat: no-repeat, repeat-x;
    background-position: left bottom;
}

.wave-area {
    flex: 1;
    min-height: 0;
    display: flex;
}

.db-scale {
    width: 49px;
    flex: none;
    display: flex;
    flex-direction: column;
}

.lane {
    flex: 1;
    min-height: 0;
    position: relative;
}

.lane + .lane {
    border-top: 1px solid #2a2a2a;
}

.lane ol {
    height: 100%;
    padding: 13px 1px;
    display: flex;
    flex-direction: column;
    font-size: 10px;
    color: #b4b4b4;
    text-align: right;
}

.lane li {
    flex: 1;
    display: flex;
    align-items: center;
    justify-content: flex-end;
}

.lane li::after {
    content: "";
    width: 2px;
    height: 1px;
    margin-left: 3px;
    background-color: #8a8a8a;
}

.badge {
    width: 20px;
    height: 17px;
    padding-right: 3px;
    border-radius: 2px;
    background-color: #5a6ea2;
    color: #fff;
    font-size: 11px;
    font-weight: normal;
    text-align: right;
}

.lane .badge {
    position: absolute;
    top: 1px;
    left: 1px;
}

.lane .fold {
    left: 23px;
    width: 14px;
    height: 14px;
    padding: 0;
}

.fold::after {
    content: "";
    display: block;
    width: 8px;
    height: 2px;
    margin: 0 auto 4px;
    background-color: #fff;
}

.wave-box {
    flex: 1;
    min-width: 0;
    overflow: hidden;
}

.wave-box canvas {
    display: block;
    width: 100%;
    height: 100%;
}

.scroll-row {
    height: 17px;
    flex: none;
    display: flex;
    border-top: 1px solid #2e2e2e;
    border-bottom: 1px solid #303030;
}

.scroll-row button {
    width: 17px;
    display: grid;
    place-items: center;
}

.scroll-row .wide {
    width: 23px;
}

.scroll-row svg {
    width: 8px;
    height: 8px;
}

.scroll-row .both {
    width: 10px;
}

.scroll-track {
    flex: 1;
    background-color: #363636;
}

.scroll-thumb {
    margin-left: 6.6%;
    width: 28.8%;
    height: 15px;
    background-color: #4a4a4a;
    border: solid #333;
    border-width: 0 4px;
    border-style: double;
}

.transport {
    height: 28px;
    flex: none;
    display: flex;
    align-items: center;
    padding-left: 3px;
}

.transport button {
    width: 24px;
    display: grid;
    place-items: center;
}

.transport label {
    margin-left: 11px;
    width: 100px;
    padding-bottom: 8px;
}

.transport input {
    appearance: none;
    width: 122px;
    height: 18px;
    margin: 0 0 8px;
    background: linear-gradient(#fff, #fff) center 6px / 100% 3px no-repeat;
}

/* box with a small pointer under it */
.transport input::-webkit-slider-thumb {
    appearance: none;
    width: 18px;
    height: 18px;
    background: repeating-linear-gradient(to right, #555 0, #555 1px, #fff 1px, #fff 3px) center 3px / 7px 8px no-repeat #fff;
    clip-path: polygon(0 0, 100% 0, 100% 13px, 9px 13px, 13px 18px, 5px 18px, 9px 13px, 0 13px);
}

.readouts {
    margin-left: auto;
    display: flex;
    gap: 3px;
    padding-right: 3px;
}

.readouts output {
    width: 72px;
    height: 18px;
    padding-right: 3px;
    background-color: #383838;
    border: 1px solid #2a2a2a;
    font-size: 11px;
    text-align: right;
}

.file-tabs {
    height: 22px;
    flex: none;
    display: flex;
    background-color: #232323;
}

.file-tabs button {
    width: 112px;
    height: 17px;
    padding-left: 8px;
    background-color: #353535;
    text-align: left;
    font-size: 11px;
}

.file-tabs .active {
    width: auto;
    display: flex;
    align-items: center;
    gap: 4px;
    padding: 0 4px 0 10px;
    background-color: #4d4d4d;
    font-size: 12px;
}

.active span {
    font-weight: bold;
    font-style: italic;
}

/* Meters */
.meters {
    width: 126px;
    flex: none;
    display: flex;
    flex-direction: column;
    overflow: hidden;
    background: linear-gradient(#454545, #454545) top / 100% calc(100% - 5px) no-repeat;
}

.meter-badges {
    display: flex;
    justify-content: space-between;
    padding: 10px 8px 4px 12px;
}

.meter {
    flex: 1;
    min-height: 0;
    margin: 0 5px 11px 10px;
    display: flex;
    flex-direction: column;
    background-color: #000;
    font-family: "Liberation Sans", Arial, sans-serif;
    color: #c4c4c4;
}

.peaks,
.channels {
    display: flex;
    justify-content: space-around;
    font-size: 10px;
}

.peaks {
    height: 25px;
}

.peaks b {
    font-size: 14px;
    color: #eee;
}

.channels {
    height: 17px;
}

.meter-scale {
    flex: 1;
    min-height: 0;
    display: grid;
    grid-template: minmax(0, 1fr) / 92px;
    justify-content: center;
}

.meter-scale canvas,
.meter-scale ol {
    grid-area: 1 / 1;
    width: 100%;
    height: 100%;
    min-height: 0;
}

.meter-scale ol {
    display: flex;
    flex-direction: column;
    align-items: center;
    font-size: 10px;
    line-height: 0;
}

.meter-scale li {
    min-height: 0;
}

.meters .dock-tab {
    margin-bottom: 5px;
}

/* Status bar */
.statusbar {
    flex: none;
    height: 23px;
    display: flex;
    justify-content: flex-end;
    gap: 2px;
    background-color: #373737;
    border-bottom: 1px solid #000;
    font-size: 11px;
}

.statusbar span {
    padding: 3px 5px 0 0;
    background-color: #414141;
    text-align: right;
    white-space: nowrap;
}

.hz {
    width: 66px;
}

.bits {
    width: 44px;
}

.mode {
    width: 53px;
}

.len {
    width: 82px;
}

.free {
    width: 85px;
}
```
FILE: script.js
```js
const DARK = "#424242", LIGHT = "#e2e2e2";
const WAVE = "#7197e4", WAVE_SEL = "#40557f";

// Waveform positions below are in units of 1485 per view width
const SPAN = 1485, SEL_START = 445, SEL_END = 1115, CURSOR = 695;

// loudness before the track gets clipped: [position, half height out of 190]
const ENVELOPE = [
    [0, 78], [40, 80], [50, 115], [62, 105], [75, 78], [130, 76], [180, 88],
    [195, 100], [212, 84], [300, 78], [380, 84], [444, 76], [446, 84],
    [478, 62], [498, 82], [517, 90], [530, 80], [545, 62], [560, 54],
    [571, 42], [577, 24], [582, 12], [588, 5]
];

function makeRandom(seed) {
    return function () {
        seed = (seed * 1664525 + 1013904223) % 4294967296;
        return seed / 4294967296;
    };
}

function envelopeAt(t) {
    for (let i = 1; i < ENVELOPE.length; i++) {
        const [x0, y0] = ENVELOPE[i - 1];
        const [x1, y1] = ENVELOPE[i];
        if (t <= x1) return y0 + (y1 - y0) * (t - x0) / (x1 - x0);
    }
    return 4;
}

function fitCanvas(canvas) {
    canvas.width = canvas.clientWidth;
    canvas.height = canvas.clientHeight;
    return canvas.getContext("2d");
}

function amplitude(t, shared, rnd) {
    const r = rnd();
    if (t < SEL_START) {
        let a = envelopeAt(t) * (0.36 + 0.34 * r + 0.5 * Math.pow(rnd(), 2));
        if (shared > 0.92) a *= 1.2 + 0.5 * r;
        return Math.min(a, 145);
    }
    if (t < 588) return envelopeAt(t) * (0.66 + 0.4 * r + (shared > 0.94 ? 0.2 : 0));
    if ((t > 592 && t < 595) || (t > 616 && t < 620)) return 1;
    if (t < 620) return 85 + 85 * Math.pow(r, 2);

    // clipped part, with dips
    const busy = t < 840 ? 0.6 : t < SEL_END ? 0.4 : 0.45;
    if (shared < busy) return 189 - 135 * Math.pow(shared / busy, 2) * (0.2 + 0.8 * r);
    return 190 - 5 * r * r;
}

function drawWave() {
    const canvas = document.getElementById("wave");
    const ctx = fitCanvas(canvas);
    const w = canvas.width, h = canvas.height;
    const px = w / SPAN, lane = h / 2, unit = lane / 382;
    const rnd = makeRandom(77);

    ctx.fillStyle = DARK;
    ctx.fillRect(0, 0, w, h);
    ctx.fillStyle = LIGHT;
    ctx.fillRect(Math.round(SEL_START * px), 0, Math.round((SEL_END - SEL_START) * px), h);

    ctx.fillStyle = "#262626";
    for (let ch = 0; ch < 2; ch++) {
        const mid = lane * (ch + 0.5);
        [-95, 0, 95].forEach(d => ctx.fillRect(0, Math.round(mid + d * unit), w, 1));
    }

    for (let x = 0; x < w; x++) {
        const t = x / px;
        const shared = rnd();
        ctx.fillStyle = t >= SEL_START && t < SEL_END ? WAVE_SEL : WAVE;
        for (let ch = 0; ch < 2; ch++) {
            const mid = lane * (ch + 0.5);
            const up = amplitude(t, shared, rnd) * unit;
            const down = amplitude(t, shared, rnd) * unit;
            ctx.fillRect(x, Math.round(mid - up), 1, Math.round(up + down));
        }
    }

    ctx.fillStyle = "#262626";
    ctx.fillRect(0, Math.round(lane), w, 1);
    ctx.fillStyle = "#b3a894";
    ctx.fillRect(Math.round(CURSOR * px), 0, 1, h);
}

function drawOverview() {
    const canvas = document.getElementById("overview");
    const ctx = fitCanvas(canvas);
    const w = canvas.width, h = canvas.height, px = w / 1534;
    const rnd = makeRandom(5);

    ctx.fillStyle = "#333333";
    ctx.fillRect(0, 0, w, h);
    ctx.fillStyle = "#3f475c";
    ctx.fillRect(0, 1, 1520 * px, h - 1);
    ctx.fillStyle = WAVE;
    ctx.fillRect(380 * px, 1, 165 * px, h - 1);
    ctx.fillStyle = WAVE_SEL;
    ctx.fillRect(330 * px, 1, 104 * px, h - 1);

    // quiet passages show the background at the lane edges
    ctx.fillStyle = "#333333";
    [[697, 738, 9], [863, 899, 9], [1112, 1190, 9], [1360, 1520, 4]].forEach(([from, to, size]) => {
        for (let x = from; x < to; x++) {
            const d = size * Math.pow(rnd(), 2);
            ctx.fillRect(x * px, 0, 1, d);
            ctx.fillRect(x * px, 32 - d, 1, d * 2);
            ctx.fillRect(x * px, h - d, 1, d);
        }
    });
    ctx.fillStyle = "#262626";
    ctx.fillRect(0, 0, w, 1);
    ctx.fillRect(0, 32, w, 1);

    ctx.fillStyle = "#ffffff";
    ctx.fillRect(330 * px, 1, 104 * px, 1);
    ctx.fillRect(330 * px, 33, 104 * px, 1);
    ctx.fillStyle = "#b3a894";
    ctx.fillRect(434 * px, 0, 1, h);
}

function drawMeter() {
    const canvas = document.getElementById("meter");
    const ctx = fitCanvas(canvas);
    const w = canvas.width, h = canvas.height;
    const y = db => (9 - db) / 69 * (h - 1);

    // x, width, peak level, level where green starts
    [[0, 9, -0.7, -9], [11, 24, -9.5, -13], [55, 24, -9.6, -13], [82, 9, -0.4, -9]].forEach(([x, bw, top, green]) => {
        ctx.fillStyle = "#e6a417";
        ctx.fillRect(x, y(top), bw, y(green) - y(top));
        const g = ctx.createLinearGradient(0, y(green), 0, h);
        g.addColorStop(0, "#2a7200");
        g.addColorStop(0.4, "#266200");
        g.addColorStop(1, "#1c3e00");
        ctx.fillStyle = g;
        ctx.fillRect(x, y(green), bw, h - y(green));
        const shade = ctx.createLinearGradient(x, 0, x + bw, 0);
        shade.addColorStop(0, "rgba(0,0,0,0.4)");
        shade.addColorStop(0.4, "rgba(0,0,0,0)");
        shade.addColorStop(1, "rgba(0,0,0,0.4)");
        ctx.fillStyle = shade;
        ctx.fillRect(x, y(top), bw, h - y(top));
    });

    [[10, 25], [55, 25]].forEach(([x, bw]) => {
        ["#999", "#777", "#444", "#222", "#181818"].forEach((c, i) => {
            ctx.fillStyle = c;
            ctx.fillRect(x, Math.round(y(-9.2)) - i * 3, bw, 1);
        });
    });

    ctx.fillStyle = "#b03038";
    ctx.fillRect(0, 0, 1, y(0));
    ctx.fillRect(w - 1, 0, 1, y(0));

    for (let db = 9; db >= -60; db--) {
        if (db < -20 && ![-25, -30, -40, -50, -60].includes(db)) continue;
        const big = [9, 0, -10, -20, -30, -40, -60].includes(db);
        const len = big ? 35 : db % 5 === 0 ? 17 : 8;
        const ty = Math.round(y(db) - 0.5);
        [[0, len], [w, w - len]].forEach(([from, to]) => {
            const g = ctx.createLinearGradient(from, 0, to, 0);
            g.addColorStop(0, "#c8d8b8");
            g.addColorStop(0.6, "#b0c0a0");
            g.addColorStop(1, "rgba(160,160,160,0.1)");
            ctx.fillStyle = g;
            ctx.fillRect(Math.min(from, to), ty, len, 1);
        });
    }
}

function fillMeterLabels() {
    const values = [9, 5, 0, -5, -10, -15, -20, -30, -40, -60];
    document.getElementById("meterLabels").innerHTML = values
        .map((v, i) => {
            const gap = i < values.length - 1 ? v - values[i + 1] : 0;
            return `<li style="flex: ${gap} 0 0px">${v}</li>`;
        })
        .join("");
}

function drawAll() {
    drawWave();
    drawOverview();
    drawMeter();
}

fillMeterLabels();
drawAll();
window.addEventListener("resize", drawAll);
```
